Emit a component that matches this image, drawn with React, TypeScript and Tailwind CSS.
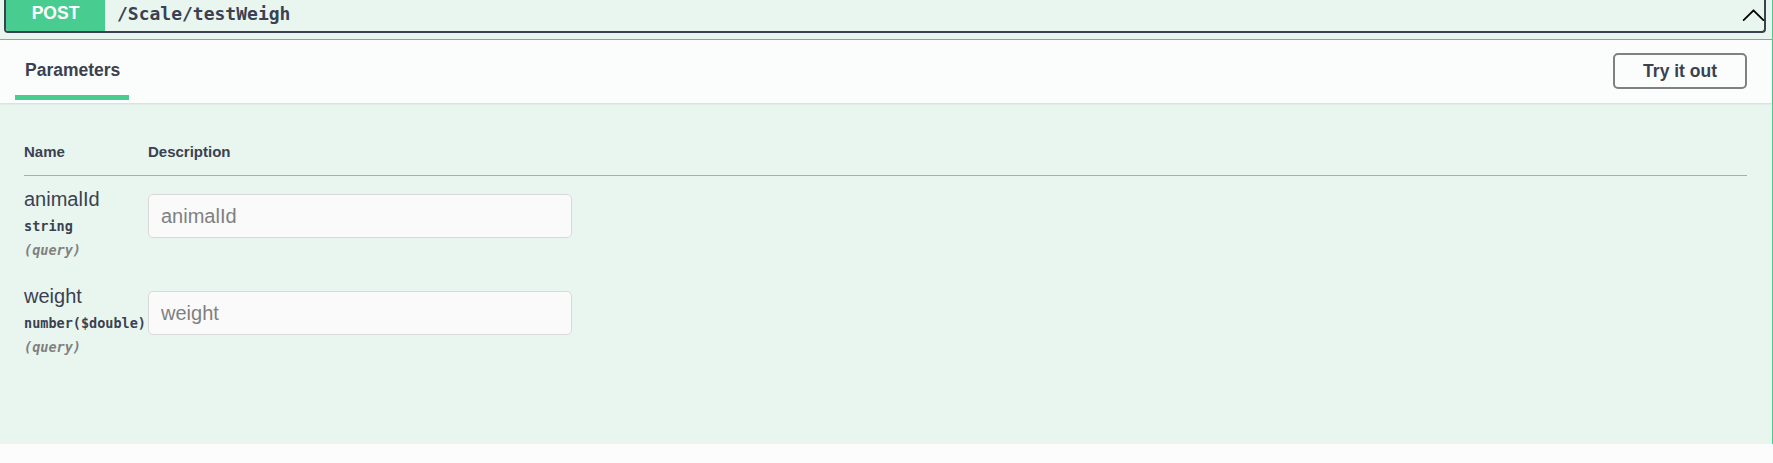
const params = [
  { name: 'animalId', type: 'string', where: '(query)' },
  { name: 'weight', type: 'number($double)', where: '(query)' },
];

function ParamRow({ name, type, where }: { name: string; type: string; where: string }) {
  return (
    <div className="flex items-start">
      {/* name / type / location */}
      <div className="w-[124px] shrink-0 whitespace-nowrap pt-[12px] pb-[14px]">
        <div className="text-[20px] leading-[23px]">{name}</div>
        <div className="py-[6px] font-['DejaVu_Sans_Mono',monospace] text-[13.5px] font-bold leading-[18px]">
          {type}
        </div>
        <div className="font-['DejaVu_Sans_Mono',monospace] text-[13.5px] font-bold italic leading-[18px] text-[#808080]">
          {where}
        </div>
      </div>
      {/* description */}
      <div className="pt-[12px]">
        <input
          type="text"
          placeholder={name}
          className="mt-[6px] h-[44px] w-[424px] rounded-[5px] border border-[#d9d9d9] bg-[#fafafa] px-[12px] text-[20px] text-[#3b4151] outline-none placeholder:text-[#808080]"
        />
      </div>
    </div>
  );
}

export default function App() {
  return (
    <div className="min-h-screen w-full bg-[#fcfcfc] font-['Liberation_Sans',Arial,sans-serif] text-[#3b4151]">
      <div className="w-full border-r border-[#49cc90] bg-[#e8f6ef]">
        {/* Summary bar */}
        <div className="border-b border-[#49cc90] pb-[6px] pl-[4px] pr-[6px]">
          <div className="flex h-[33px] items-start rounded-b-[4px] border-2 border-t-0 border-[#3b4151]">
            <span className="h-[31px] w-[99px] shrink-0 rounded-bl-[3px] bg-[#49cc90] pt-[3px] text-center text-[17.5px] font-bold leading-[20px] text-white">
              POST
            </span>
            <span className="pl-[12px] pt-[4px] font-['DejaVu_Sans_Mono',monospace] text-[18px] font-bold leading-[20px]">
              /Scale/testWeigh
            </span>
            <svg
              className="-mr-[2px] ml-auto mt-[2px] shrink-0"
              width="25"
              height="25"
              viewBox="0 0 20 20"
              aria-hidden="true"
            >
              <path
                fill="#000"
                d="M17.418 14.908c.272.268.709.268.979 0s.271-.701 0-.969l-7.908-7.83a.697.697 0 0 0-.979 0l-7.908 7.83c-.27.268-.27.701 0 .969.271.268.709.268.979 0L10 7.767l7.418 7.141z"
              />
            </svg>
          </div>
        </div>

        {/* Section header */}
        <div className="relative flex h-[63px] items-start justify-between bg-white/80 px-[25px] shadow-[0_1px_2px_rgba(0,0,0,0.1)]">
          <div className="flex flex-col pt-[20px]">
            <h4 className="text-[17.5px] font-bold leading-[20px]">Parameters</h4>
            <div className="-ml-[10px] mt-[15px] h-[5px] w-[114px] bg-[#49cc90]" />
          </div>
          <button className="mt-[13px] h-[36px] rounded-[5px] border-2 border-[#808080] px-[28px] text-[17.5px] font-bold leading-[20px]">
            Try it out
          </button>
        </div>

        {/* Parameters table */}
        <div className="pb-[74px] pl-[24px] pr-[25px] pt-[25px]">
          <div className="flex border-b border-[#a6aeab] py-[15px] text-[15px] font-bold leading-[17px]">
            <div className="w-[124px] shrink-0">Name</div>
            <div>Description</div>
          </div>
          {params.map((p) => (
            <ParamRow key={p.name} {...p} />
          ))}
        </div>
      </div>
    </div>
  );
}
